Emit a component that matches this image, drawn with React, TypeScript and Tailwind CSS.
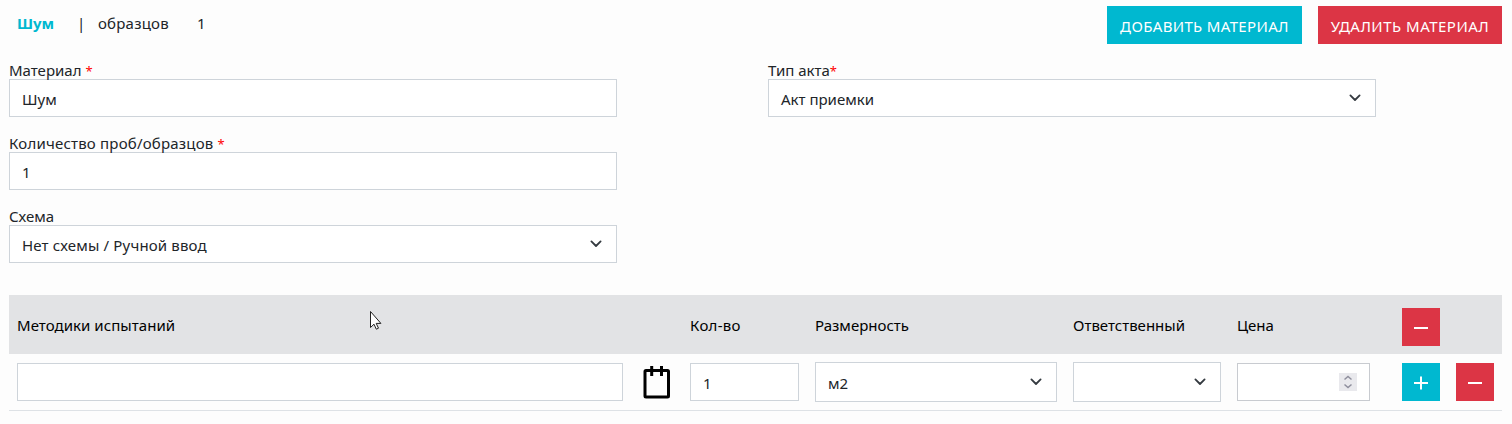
import type { ReactNode } from 'react';

const TABLE_COLUMNS = 'grid grid-cols-[622px_51px_125px_258px_164px_165px_54px_54px] items-center';

function Chevron() {
  return (
    <svg className="h-4 w-3 shrink-0" viewBox="0 0 12 16" fill="none" stroke="#343a40" strokeWidth="1.8" strokeLinecap="round" strokeLinejoin="round">
      <path d="M1.4 6.4 6 11l4.6-4.6" />
    </svg>
  );
}

function Box({ children, select, className = 'h-[38px]' }: { children?: ReactNode; select?: boolean; className?: string }) {
  return (
    <div className={`flex items-center justify-between border border-[#ced4da] bg-white pt-px pl-3 pr-3.5 ${className}`}>
      <span>{children}</span>
      {select && <span className="-mt-1"><Chevron /></span>}
    </div>
  );
}

function Field({ label, required, children }: { label: ReactNode; required?: boolean; children: ReactNode }) {
  return (
    <div className="w-[608px]">
      <div className="h-[19px] leading-5">
        {label}
        {required && <span className="text-[13px] text-[#ff0000]">*</span>}
      </div>
      {children}
    </div>
  );
}

function IconButton({ plus }: { plus?: boolean }) {
  return (
    <button className={`flex size-[38px] items-center justify-center ${plus ? 'bg-[#00b8d0]' : 'bg-[#dc3545]'}`}>
      <svg className="mt-0.5 size-4" viewBox="0 0 16 16" stroke="#fff" strokeWidth="2">
        <path d="M1 8h14" />
        {plus && <path d="M8 1.5v13" />}
      </svg>
    </button>
  );
}

function Clipboard() {
  return (
    <svg className="h-[34px] w-7" viewBox="0 0 28 34" fill="none" stroke="#000" strokeWidth="3">
      <rect x="2" y="5.5" width="23.5" height="26.5" rx="1" />
      <path d="M8.7 1v10M18.5 1v10" />
    </svg>
  );
}

function Cursor() {
  return (
    <svg className="absolute top-[15px] left-[360px] h-[21px] w-[14px]" viewBox="0 0 14 21" fill="#fff" stroke="#222" strokeWidth="1">
      <path d="M1.5 1.5v16l3.5-3.3 2.3 5 2.2-1-2.3-4.8h4.7z" />
    </svg>
  );
}

export default function App() {
  return (
    <main className="h-[424px] w-[1512px] bg-[#fdfdfd] pr-2.5 pl-[9px] pt-1.5 font-['Noto_Sans','Open_Sans',sans-serif] text-[15px] leading-6 text-[#212529]">
      <header className="flex h-[38px] justify-between">
        <div className="flex pt-[5px] pl-2">
          <b className="w-[60px] text-[#00b8d0]">Шум</b>
          <span className="w-[21px]">|</span>
          <span className="w-[99px] tracking-[0.2px]">образцов</span>
          <span>1</span>
        </div>
        <div className="flex gap-4 text-white">
          <button className="w-[195px] bg-[#00b8d0] pt-px tracking-[0.35px] whitespace-nowrap">ДОБАВИТЬ МАТЕРИАЛ</button>
          <button className="w-[184px] bg-[#dc3545] pt-px tracking-[0.5px] whitespace-nowrap">УДАЛИТЬ МАТЕРИАЛ</button>
        </div>
      </header>

      <section className="flex gap-[151px] pt-4">
        <div className="flex flex-col gap-4">
          <Field label="Материал " required><Box>Шум</Box></Field>
          <Field label={<span className="tracking-[0.2px]">Количество проб/образцов </span>} required><Box>1</Box></Field>
          <Field label="Схема"><Box select><span className="tracking-[0.16px]">Нет схемы / Ручной ввод</span></Box></Field>
        </div>
        <Field label="Тип акта" required><Box select>Акт приемки</Box></Field>
      </section>

      <section className="mt-8">
        <div className={`relative h-[59px] bg-[#e2e3e5] text-black ${TABLE_COLUMNS}`}>
          <span className="pl-2 tracking-[0.05px]">Методики испытаний</span>
          <span />
          <span className="pl-2 tracking-[0.3px]">Кол-во</span>
          <span className="pl-2">Размерность</span>
          <span className="pl-2">Ответственный</span>
          <span className="pl-2">Цена</span>
          <div className="pt-1 pl-2"><IconButton /></div>
          <Cursor />
        </div>
        <div className={`h-[57px] border-b border-[#dee2e6] ${TABLE_COLUMNS}`}>
          <div className="px-2"><Box /></div>
          <div className="pl-3"><Clipboard /></div>
          <div className="px-2"><Box>1</Box></div>
          <div className="px-2"><Box select className="h-10">м2</Box></div>
          <div className="px-2"><Box select className="h-10" /></div>
          <div className="pr-6 pl-2">
            <div className="flex h-[38px] items-center justify-end border border-[#c8cbd0] bg-white pr-3">
              <svg className="size-[18px] bg-[#e9e9ed]" viewBox="0 0 18 18" fill="none" stroke="#8f8f9d" strokeWidth="1.5">
                <path d="m5.5 6.5 3.5-3 3.5 3M5.5 11.5l3.5 3 3.5-3" />
              </svg>
            </div>
          </div>
          <div className="pl-2"><IconButton plus /></div>
          <div className="pl-2"><IconButton /></div>
        </div>
      </section>
    </main>
  );
}
